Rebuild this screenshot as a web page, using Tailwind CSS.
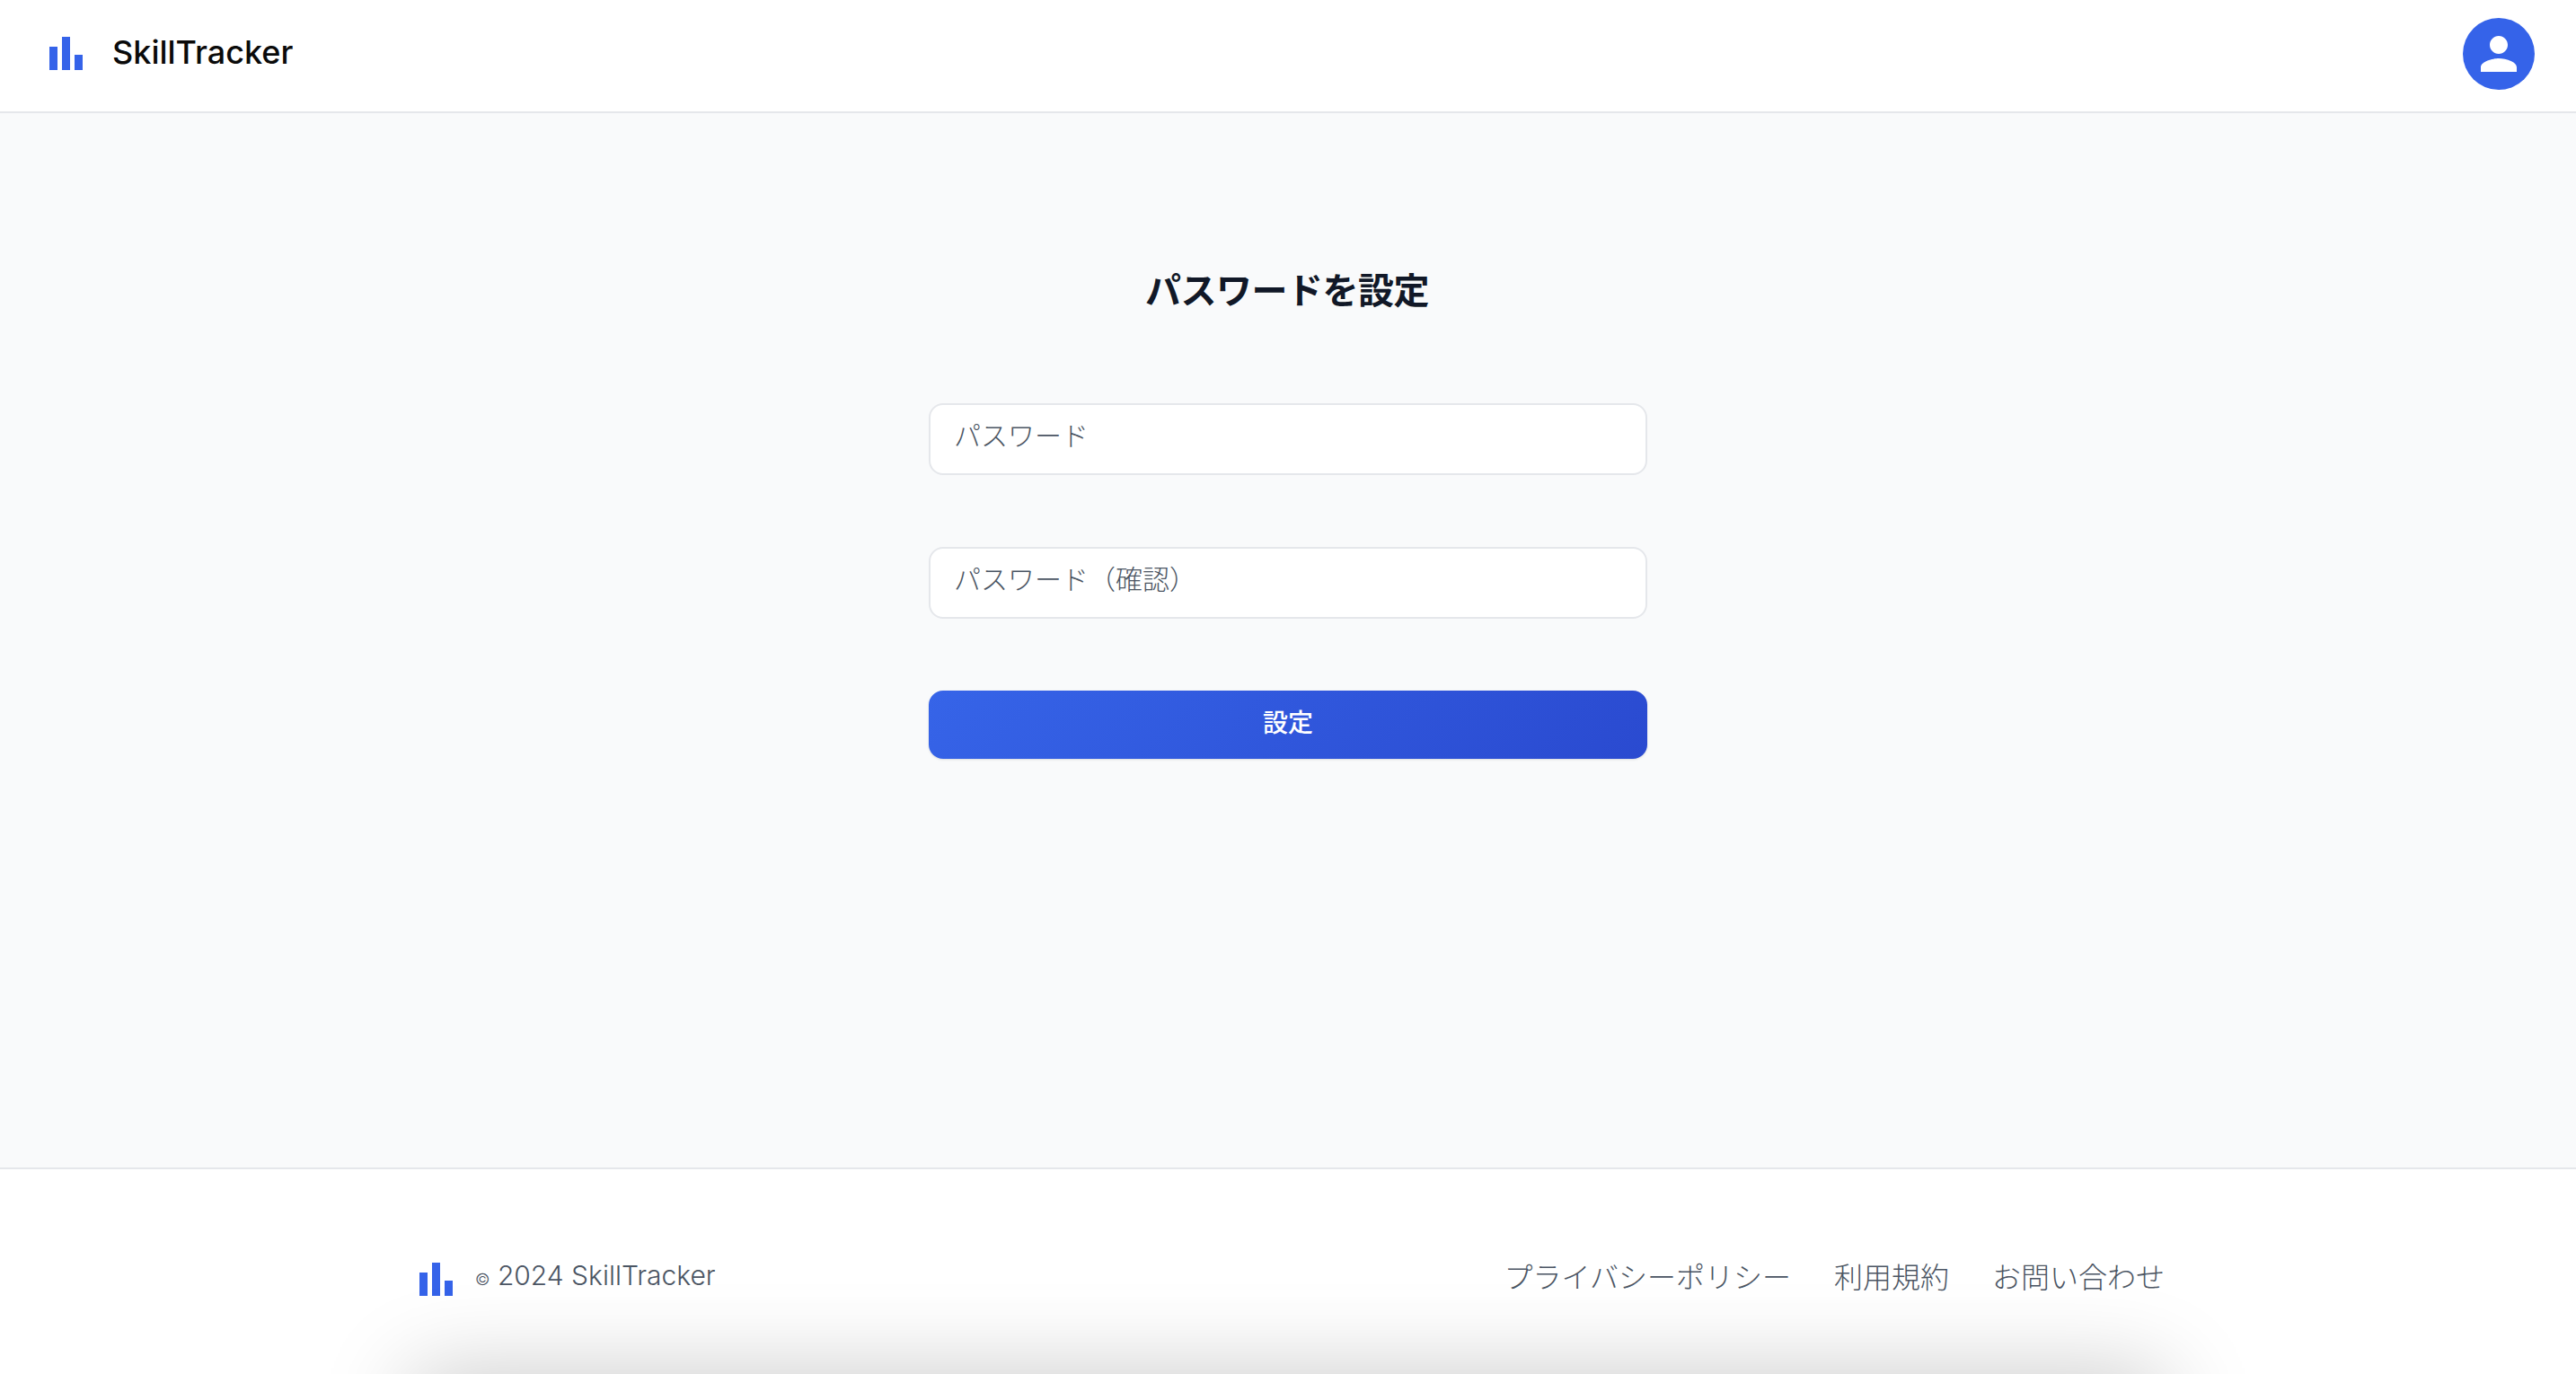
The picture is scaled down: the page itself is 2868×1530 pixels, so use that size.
<!DOCTYPE html>
<html lang="ja">
  <head>
    <meta charset="UTF-8" />
    <title>SkillTracker</title>
    <script src="https://cdn.jsdelivr.net/npm/@tailwindcss/browser@4"></script>
  </head>
  <body class="h-[1530px] overflow-hidden flex flex-col bg-[#f9fafb] font-['Inter','Noto_Sans_CJK_JP',sans-serif]">

    <!-- Header -->
    <header class="h-[126px] shrink-0 flex items-center justify-between pl-[55px] pr-[46px] pb-[4px] bg-white border-b-2 border-[#e5e7eb]">
      <div class="flex items-center gap-[33px]">
        <svg class="w-[37px] h-[37px] mt-[-1px]" viewBox="0 0 37 37" fill="#3563e9">
          <rect x="0" y="11" width="9" height="26" />
          <rect x="14" y="0" width="9" height="37" />
          <rect x="28" y="20" width="9" height="17" />
        </svg>
        <span class="text-[36px] leading-[48px] font-medium text-[#0a0a0a] mt-[-4px]">SkillTracker</span>
      </div>
      <div class="w-[80px] h-[80px] rounded-full bg-[#3563e9] flex items-center justify-center">
        <svg class="w-[60px] h-[60px]" viewBox="0 0 24 24" fill="#ffffff">
          <path d="M12 12c2.21 0 4-1.79 4-4s-1.79-4-4-4-4 1.79-4 4 1.79 4 4 4zm0 2c-2.67 0-8 1.34-8 4v2h16v-2c0-2.66-5.33-4-8-4z" />
        </svg>
      </div>
    </header>

    <!-- Form -->
    <main class="flex-1 flex flex-col items-center pt-[174px]">
      <h1 class="text-[40px] leading-[48px] font-bold tracking-[-0.5px] mr-[2px] text-[#111827]">パスワードを設定</h1>
      <form class="w-[800px] mt-[101px] flex flex-col">
        <input type="password" placeholder="パスワード" class="h-[80px] px-[26px] pb-[9px] bg-white border-2 border-[#e5e7eb] rounded-[16px] text-[30px] placeholder:text-[#4b5563] font-light" />
        <input type="password" placeholder="パスワード（確認）" class="h-[80px] mt-[80px] px-[26px] pb-[9px] bg-white border-2 border-[#e5e7eb] rounded-[16px] text-[30px] placeholder:text-[#4b5563] font-light" />
        <button type="button" class="h-[76px] mt-[80px] pb-[4px] rounded-[16px] bg-linear-[135deg,#3664e8,#2a4ad0] text-white text-[28px] font-medium shadow-sm">設定</button>
      </form>
    </main>

    <!-- Footer -->
    <footer class="relative h-[230px] shrink-0 bg-white border-t-2 border-[#e5e7eb] overflow-hidden">
      <div class="w-[1952px] mx-auto pt-[96px] flex items-center justify-between">
        <div class="flex items-center gap-[25px] pl-[9px]">
          <svg class="w-[37px] h-[37px] mt-[4px]" viewBox="0 0 37 37" fill="#3563e9">
            <rect x="0" y="11" width="9" height="26" />
            <rect x="14" y="0" width="9" height="37" />
            <rect x="28" y="20" width="9" height="17" />
          </svg>
          <p class="text-[30px] leading-[44px] font-light text-[#4b5563]"><span class="text-[18px]">©</span> 2024 SkillTracker</p>
        </div>
        <nav class="flex gap-[48px] text-[32px] leading-[44px] font-light text-[#4b5563]">
          <a href="#">プライバシーポリシー</a>
          <a href="#">利用規約</a>
          <a href="#">お問い合わせ</a>
        </nav>
      </div>
      <!-- shadow of whatever sits just below the fold -->
      <div class="absolute left-[458px] top-[228px] w-[1952px] h-[100px] shadow-[0_0_100px_0_rgba(0,0,0,0.22)]"></div>
    </footer>
  </body>
</html>
